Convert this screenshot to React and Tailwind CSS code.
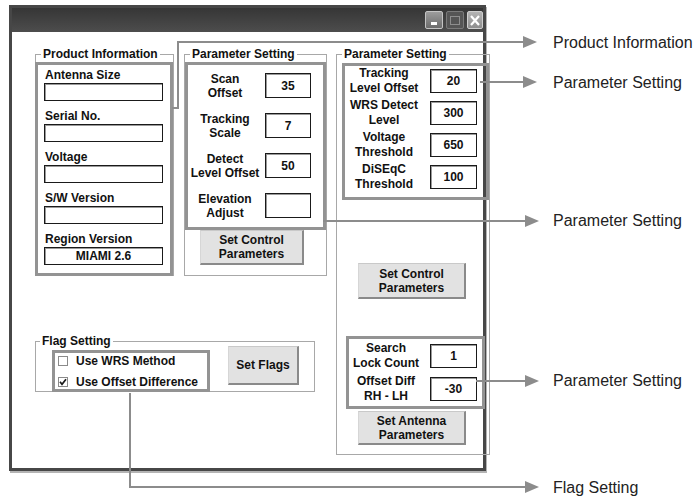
import React from "react";

const Box = ({ w, h, children, className = "" }) => (
  <div
    className={`flex items-center justify-center bg-white border border-[#1a1a1a] shadow-[inset_1px_1px_0_#9a9a9a] leading-none ${className}`}
    style={{ width: w, height: h }}
  >
    {children}
  </div>
);

const Btn = ({ w, h, children, className = "" }) => (
  <div
    className={`flex items-center justify-center text-center leading-[14px] bg-[#e2e2e2] border-t border-l border-t-[#c9c9c9] border-l-[#d6d6d6] border-b-2 border-r-2 border-b-[#8a8a8a] border-r-[#8a8a8a] ${className}`}
    style={{ width: w, height: h }}
  >
    {children}
  </div>
);

const PField = ({ label, value }) => (
  <div className="flex flex-col">
    <div className="h-[16px] leading-[16px] ml-[1px]">{label}</div>
    <Box w={119} h={18}>{value}</Box>
  </div>
);

const MidRow = ({ l1, l2, value }) => (
  <div className="flex items-center h-[25px]">
    <div className="w-[72px] ml-[1px] text-center leading-[14px]">
      {l1}
      <br />
      {l2}
    </div>
    <Box w={46} h={25} className="ml-[4px]">{value}</Box>
  </div>
);

const RightRow = ({ l1, l2, value, lw = 78 }) => (
  <div className="flex items-center h-[30px]">
    <div className="text-center leading-[15px]" style={{ width: lw }}>
      {l1}
      <br />
      {l2}
    </div>
    <Box w={47} h={24} className="ml-[7px]">{value}</Box>
  </div>
);

const Check = ({ checked, label }) => (
  <div className="flex items-center h-[16px]">
    <div className="w-[10px] h-[10px] border border-[#8a8a8a] bg-white flex items-center justify-center">
      {checked && (
        <svg width="8" height="8" viewBox="0 0 8 8">
          <polyline points="1,3.8 3,6.3 7,1.2" fill="none" stroke="#1a1a1a" strokeWidth="1.7" />
        </svg>
      )}
    </div>
    <div className="ml-[8px] leading-[16px]">{label}</div>
  </div>
);

const Legend = ({ children, ml = 5 }) => (
  <legend className="px-[2px] leading-[14px]" style={{ marginLeft: ml }}>
    {children}
  </legend>
);

export default function App() {
  return (
    <div className="relative w-[698px] h-[497px] bg-white overflow-hidden pt-[5px] pl-[9px] font-['Liberation_Sans',Arial,sans-serif] text-[12px] font-bold text-[#111]">
      {/* Window */}
      <div className="w-[477px] h-[466px] border-[3px] border-[#474747] shadow-[1px_2px_0_#b4b4b4] bg-white flex flex-col">
        {/* Title bar */}
        <div className="h-[24px] bg-linear-to-b from-[#363636] to-[#4d4d4d] flex justify-end items-start pt-[3px] gap-[3px]">
          <div className="w-[18px] h-[18px] rounded-[2px] border border-[#c4c4c4] bg-linear-to-b from-[#9c9c9c] to-[#6c6c6c] flex items-end justify-center pb-[3px]">
            <div className="w-[6px] h-[3px] bg-white"></div>
          </div>
          <div className="w-[18px] h-[18px] rounded-[2px] border border-[#7a7a7a] bg-[#555] flex items-center justify-center">
            <div className="w-[10px] h-[9px] border border-[#8e8e8e]"></div>
          </div>
          <div className="w-[16px] h-[18px] rounded-[2px] border border-[#cfcfcf] bg-linear-to-b from-[#b4b4b4] to-[#8e8e8e] flex items-center justify-center">
            <svg width="10" height="11" viewBox="0 0 10 11">
              <path d="M1 1 L9 10 M9 1 L1 10" stroke="#fff" strokeWidth="2.2" />
            </svg>
          </div>
        </div>

        {/* Content */}
        <div className="flex items-start pl-[23px] pt-[15px]">
          {/* Left column */}
          <div className="flex flex-col">
            <div className="flex gap-[10px]">
              {/* Product Information */}
              <fieldset className="w-[136px] border border-[#a8a8a8]">
                <Legend ml={5}>Product Information</Legend>
                <div className="-ml-[1px] mt-[1px] -mb-[1px] w-[138px] h-[214px] border-[3px] border-[#939393] pl-[6px] pt-[2px] flex flex-col gap-[7px]">
                  <PField label="Antenna Size" value="" />
                  <PField label="Serial No." value="" />
                  <PField label="Voltage" value="" />
                  <PField label="S/W Version" value="" />
                  <PField label="Region Version" value="MIAMI 2.6" />
                </div>
              </fieldset>

              {/* Parameter Setting (middle) */}
              <fieldset className="w-[137px] border border-[#a8a8a8] flex flex-col">
                <Legend ml={5}>Parameter Setting</Legend>
                <div className="mt-[1px] w-[141px] h-[168px] border-[3px] border-[#939393] pt-[8px] flex flex-col gap-[15px]">
                  <MidRow l1="Scan" l2="Offset" value="35" />
                  <MidRow l1="Tracking" l2="Scale" value="7" />
                  <MidRow l1="Detect" l2="Level Offset" value="50" />
                  <MidRow l1="Elevation" l2="Adjust" value="" />
                </div>
                <Btn w={104} h={35} className="ml-[15px]">
                  Set Control
                  <br />
                  Parameters
                </Btn>
              </fieldset>
            </div>

            {/* Flag Setting */}
            <fieldset className="mt-[58px] w-[280px] border border-[#a8a8a8]">
              <Legend ml={4}>Flag Setting</Legend>
              <div className="flex items-start">
                <div className="ml-[16px] mt-[2px] -mb-[1px] w-[158px] h-[42px] border-[3px] border-[#939393] pl-[3px] flex flex-col justify-center gap-[5px]">
                  <Check label="Use WRS Method" />
                  <Check checked label="Use Offset Difference" />
                </div>
                <Btn w={71} h={39} className="ml-[18px] -mt-[2px]">
                  Set Flags
                </Btn>
              </div>
            </fieldset>
          </div>

          {/* Right Parameter Setting */}
          <fieldset className="ml-[9px] w-[150px] border border-[#a8a8a8] flex flex-col pb-[9px]">
            <Legend ml={5}>Parameter Setting</Legend>
            <div className="ml-[5px] mt-[2px] w-[147px] h-[137px] border-[3px] border-[#939393] flex flex-col gap-[2px]">
              <RightRow l1="Tracking" l2="Level Offset" value="20" />
              <RightRow l1="WRS Detect" l2="Level" value="300" />
              <RightRow l1="Voltage" l2="Threshold" value="650" />
              <RightRow l1="DiSEqC" l2="Threshold" value="100" />
            </div>
            <Btn w={108} h={36} className="mt-[63px] ml-[21px]">
              Set Control
              <br />
              Parameters
            </Btn>
            <div className="ml-[9px] mt-[37px] w-[139px] h-[73px] border-[3px] border-[#939393] pt-[2px] flex flex-col gap-[3px]">
              <RightRow l1="Search" l2="Lock Count" value="1" lw={74} />
              <RightRow l1="Offset Diff" l2="RH - LH" value="-30" lw={74} />
            </div>
            <Btn w={108} h={34} className="mt-[2px] ml-[21px]">
              Set Antenna
              <br />
              Parameters
            </Btn>
          </fieldset>
        </div>
      </div>

      {/* Annotation lines */}
      <svg
        className="absolute top-0 left-0 pointer-events-none"
        width="698"
        height="497"
        viewBox="0 0 698 497"
      >
        <g fill="none" stroke="#8c8c8c" strokeWidth="2">
          <path d="M172 108 H178 V42 H526" />
          <path d="M480 82 H526" />
          <path d="M323 221 H528" />
          <path d="M476 381 H528" />
          <path d="M130 393 V487 H528" />
        </g>
        <g fill="#8c8c8c">
          <polygon points="523,36 537,42 523,48" />
          <polygon points="523,76 537,82 523,88" />
          <polygon points="525,215 539,221 525,227" />
          <polygon points="525,375 539,381 525,387" />
          <polygon points="525,481 539,487 525,493" />
        </g>
      </svg>

      {/* Annotation labels */}
      <div className="absolute left-[553px] top-[34px] text-[16px] font-normal leading-[18px] text-[#222] whitespace-nowrap">
        Product Information
      </div>
      <div className="absolute left-[553px] top-[74px] text-[16px] font-normal leading-[18px] text-[#222] whitespace-nowrap">
        Parameter Setting
      </div>
      <div className="absolute left-[553px] top-[212px] text-[16px] font-normal leading-[18px] text-[#222] whitespace-nowrap">
        Parameter Setting
      </div>
      <div className="absolute left-[553px] top-[372px] text-[16px] font-normal leading-[18px] text-[#222] whitespace-nowrap">
        Parameter Setting
      </div>
      <div className="absolute left-[553px] top-[479px] text-[16px] font-normal leading-[18px] text-[#222] whitespace-nowrap">
        Flag Setting
      </div>
    </div>
  );
}
